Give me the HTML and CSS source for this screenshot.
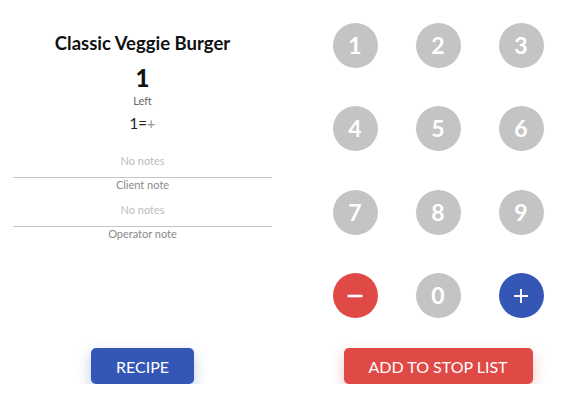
FILE: index.html
```html
<!DOCTYPE html>
<html>
<head>
<meta charset="utf-8">
<link rel="stylesheet" href="styles.css">
</head>
<body>
<div class="page">
  <section class="info">
    <h1 class="title">Classic Veggie Burger</h1>
    <div class="count">1</div>
    <div class="count-label">Left</div>
    <div class="formula"><span class="f-main">1=</span><span class="f-plus">+</span></div>
    <div class="notes">
      <div class="note">
        <div class="note-value">No notes</div>
        <div class="note-label">Client note</div>
      </div>
      <div class="note">
        <div class="note-value">No notes</div>
        <div class="note-label">Operator note</div>
      </div>
    </div>
  </section>
  <section class="keypad">
    <button class="key">1</button>
    <button class="key">2</button>
    <button class="key">3</button>
    <button class="key">4</button>
    <button class="key">5</button>
    <button class="key">6</button>
    <button class="key">7</button>
    <button class="key">8</button>
    <button class="key">9</button>
    <button class="key key-minus"><svg width="16" height="16" viewBox="0 0 16 16"><line x1="0.5" y1="8" x2="15.5" y2="8" stroke="#fff" stroke-width="2.6"/></svg></button>
    <button class="key">0</button>
    <button class="key key-plus"><svg width="16" height="16" viewBox="0 0 16 16"><line x1="1" y1="8" x2="15" y2="8" stroke="#fff" stroke-width="1.9"/><line x1="8" y1="1" x2="8" y2="15" stroke="#fff" stroke-width="1.9"/></svg></button>
  </section>
  <div class="action">
    <button class="btn btn-blue btn-recipe">RECIPE</button>
  </div>
  <div class="action">
    <button class="btn btn-red btn-stop">ADD TO STOP LIST</button>
  </div>
</div>
</body>
</html>
```
FILE: styles.css
```css
* { box-sizing: border-box; }
html, body {
  margin: 0;
  padding: 0;
  background: #fff;
  font-family: Lato, "Open Sans", sans-serif;
}
.page {
  display: grid;
  grid-template-columns: 259px 211px;
  column-gap: 60.5px;
  row-gap: 30px;
  padding-left: 13px;
  align-items: start;
}
.info {
  padding-top: 32px;
  text-align: center;
}
.title {
  margin: 0;
  font-size: 18.5px;
  line-height: 22px;
  font-weight: 700;
  color: #111;
}
.count {
  margin-top: 10px;
  font-size: 24px;
  line-height: 28px;
  font-weight: 900;
  color: #111;
}
.count-label {
  margin-top: 2px;
  font-size: 11px;
  line-height: 13px;
  color: #666;
}
.formula {
  margin-top: 7px;
  font-size: 15px;
  line-height: 18px;
}
.f-main { color: #222; }
.f-plus { color: #9a9a9a; }
.notes {
  margin-top: 9px;
}
.note-value {
  padding: 13px 0 10px;
  font-size: 11px;
  line-height: 13px;
  color: #bdbdbd;
  border-bottom: 1px solid #c6c6c6;
}
.note-label {
  font-size: 11px;
  line-height: 13px;
  color: #8a8a8a;
}
.note + .note .note-value {
  padding-top: 12px;
}
.keypad {
  padding-top: 22.5px;
  display: grid;
  grid-template-columns: repeat(3, 45px);
  grid-auto-rows: 45px;
  column-gap: 38px;
  row-gap: 38.5px;
}
.key {
  width: 45px;
  height: 45px;
  border: none;
  border-radius: 50%;
  background: #c4c4c4;
  color: #fff;
  font-family: Lato, sans-serif;
  font-weight: 700;
  font-size: 23px;
  line-height: 1;
  padding: 0;
  display: flex;
  align-items: center;
  justify-content: center;
}
.key-minus { background: #e04a46; }
.key-plus { background: #3457b5; }
.action {
  display: flex;
  justify-content: center;
}
.btn {
  height: 36px;
  border: none;
  border-radius: 5px;
  color: #fff;
  font-family: Lato, sans-serif;
  font-size: 16px;
  padding: 0;
  display: flex;
  align-items: center;
  justify-content: center;
}
.btn-blue {
  background: #3457b5;
  box-shadow: 0 6px 14px rgba(52, 87, 181, 0.32);
}
.btn-red {
  background: #e04a46;
  box-shadow: 0 6px 14px rgba(224, 74, 70, 0.32);
}
.btn-recipe { width: 103px; }
.btn-stop { width: 189px; }
```
